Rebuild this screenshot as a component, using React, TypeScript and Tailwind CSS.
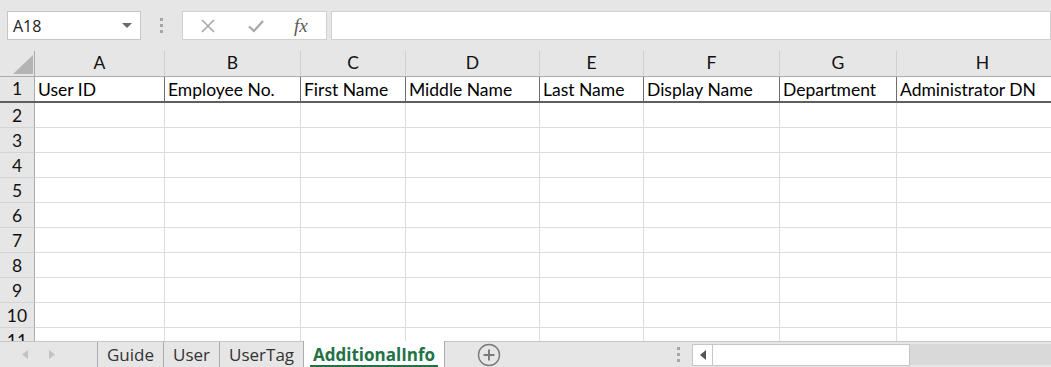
import React from 'react';

const COLUMNS = [
  { key: 'A', width: 'w-[130px]', title: 'User ID' },
  { key: 'B', width: 'w-[136px]', title: 'Employee No.' },
  { key: 'C', width: 'w-[105px]', title: 'First Name' },
  { key: 'D', width: 'w-[134px]', title: 'Middle Name' },
  { key: 'E', width: 'w-[104px]', title: 'Last Name' },
  { key: 'F', width: 'w-[136px]', title: 'Display Name' },
  { key: 'G', width: 'w-[117px]', title: 'Department' },
  { key: 'H', width: 'w-[172px]', title: 'Administrator DN' },
];

const ROWS = [2, 3, 4, 5, 6, 7, 8, 9, 10, 11];

const SHEETS = ['Guide', 'User', 'UserTag'];

const cellFont = { fontFamily: 'Lato, "Liberation Sans", sans-serif' };
const uiFont = { fontFamily: '"Open Sans", "Noto Sans", sans-serif' };

function Dots() {
  return (
    <div className="flex flex-col gap-[3px]">
      <span className="w-[3px] h-[3px] bg-[#a6a6a6]" />
      <span className="w-[3px] h-[3px] bg-[#a6a6a6]" />
      <span className="w-[3px] h-[3px] bg-[#a6a6a6]" />
    </div>
  );
}

function FormulaBar() {
  return (
    <div className="h-[51px] bg-[#e6e6e6] flex items-center shrink-0">
      <div className="ml-[7px] w-[134px] h-[29px] bg-white border border-[#c6c6c6] flex items-center justify-between pl-[5px] pr-[8px]">
        <span className="text-[16px] text-[#222]" style={uiFont}>A18</span>
        <svg width="10" height="6" viewBox="0 0 10 6">
          <path d="M0 0 L10 0 L5 5 Z" fill="#6a6a6a" />
        </svg>
      </div>
      <div className="ml-[19px] mr-[19px]">
        <Dots />
      </div>
      <div className="w-[145px] h-[29px] bg-white border border-[#d0d0d0] flex items-center">
        <svg className="ml-[17px]" width="16" height="16" viewBox="0 0 16 16">
          <path d="M2 2 L14 14 M14 2 L2 14" stroke="#a8a8a8" strokeWidth="1.6" fill="none" />
        </svg>
        <svg className="ml-[31px]" width="18" height="16" viewBox="0 0 18 16">
          <path d="M2 8.5 L7 13 L16 3" stroke="#a8a8a8" strokeWidth="2.2" fill="none" />
        </svg>
        <span
          className="ml-[29px] text-[19px] italic text-[#5a5a5a] leading-none"
          style={{ fontFamily: '"Liberation Serif", "DejaVu Serif", serif' }}
        >
          fx
        </span>
      </div>
      <div className="ml-[4px] flex-1 h-[29px] bg-white border border-[#d0d0d0]" />
    </div>
  );
}

function ColumnHeader() {
  return (
    <div className="flex h-[26px] bg-[#e6e6e6] border-b border-[#ababab] shrink-0" style={cellFont}>
      <div className="w-[35px] shrink-0 border-r border-[#ababab] relative">
        <svg className="absolute left-[13px] top-[4px]" width="20" height="19" viewBox="0 0 20 19">
          <path d="M20 0 L20 19 L0 19 Z" fill="#b4b4b4" />
        </svg>
      </div>
      {COLUMNS.map((c) => (
        <div
          key={c.key}
          className={`${c.width} shrink-0 border-r border-[#d0d0d0] flex items-center justify-center text-[17.5px] text-[#111]`}
        >
          {c.key}
        </div>
      ))}
    </div>
  );
}

function Grid() {
  return (
    <div className="flex-1 overflow-hidden bg-white" style={cellFont}>
      <div className="flex h-[26px] border-b-2 border-[#5f5f5f]">
        <div className="w-[35px] shrink-0 bg-[#e6e6e6] border-r border-[#ababab] flex items-center justify-center text-[17.5px] text-[#111]">
          1
        </div>
        {COLUMNS.map((c) => (
          <div
            key={c.key}
            className={`${c.width} shrink-0 border-r border-[#6f6f6f] flex items-center pt-[2px] pl-[3px] text-[17.5px] text-black whitespace-nowrap overflow-hidden`}
          >
            {c.title}
          </div>
        ))}
      </div>
      {ROWS.map((r) => (
        <div key={r} className="flex h-[25px]">
          <div className="w-[35px] shrink-0 bg-[#e6e6e6] border-r border-[#ababab] border-b border-b-[#d4d4d4] flex items-center justify-center pt-[2px] text-[17.5px] text-[#111]">
            {r}
          </div>
          {COLUMNS.map((c) => (
            <div key={c.key} className={`${c.width} shrink-0 border-r border-b border-[#dcdcdc]`} />
          ))}
        </div>
      ))}
    </div>
  );
}

function SheetTabs() {
  return (
    <div className="h-[26px] bg-[#e6e6e6] border-t border-[#c6c6c6] flex items-stretch shrink-0" style={uiFont}>
      <div className="w-[97px] shrink-0 flex items-center">
        <svg className="ml-[22px]" width="6" height="9" viewBox="0 0 6 9">
          <path d="M6 0 L6 9 L0 4.5 Z" fill="#c2c2c2" />
        </svg>
        <svg className="ml-[21px]" width="6" height="9" viewBox="0 0 6 9">
          <path d="M0 0 L0 9 L6 4.5 Z" fill="#c2c2c2" />
        </svg>
      </div>
      {SHEETS.map((s) => (
        <div
          key={s}
          className="border-l border-[#ababab] px-[9px] flex items-center text-[17px] text-[#333] leading-none"
        >
          {s}
        </div>
      ))}
      <div className="-mt-px bg-white border-l border-r border-[#ababab] w-[142px] flex flex-col items-center justify-center relative">
        <span className="text-[17px] font-bold text-[#217346] leading-none">AdditionalInfo</span>
        <span className="absolute left-[6px] right-[6px] bottom-0 h-[2px] bg-[#217346]" />
      </div>
      <div className="ml-[32px] flex items-center">
        <svg width="24" height="24" viewBox="0 0 24 24">
          <circle cx="12" cy="12" r="10.5" stroke="#7a7a7a" strokeWidth="1.4" fill="none" />
          <path d="M12 6.5 V17.5 M6.5 12 H17.5" stroke="#7a7a7a" strokeWidth="2" />
        </svg>
      </div>
      <div className="flex-1" />
      <div className="flex items-center mr-[12px]">
        <Dots />
      </div>
      <div className="flex items-center">
        <div className="h-[22px] w-[218px] bg-white border border-[#c6c6c6] flex">
          <div className="w-[20px] border-r border-[#c6c6c6] flex items-center justify-center">
            <svg width="6" height="10" viewBox="0 0 6 10">
              <path d="M6 0 L6 10 L0 5 Z" fill="#555" />
            </svg>
          </div>
        </div>
      </div>
      <div className="w-[141px] bg-[#d9d9d9] mt-[2px] mb-[2px]" />
    </div>
  );
}

export default function App() {
  return (
    <div className="w-[1051px] h-[367px] overflow-hidden flex flex-col bg-white">
      <FormulaBar />
      <ColumnHeader />
      <Grid />
      <SheetTabs />
    </div>
  );
}
